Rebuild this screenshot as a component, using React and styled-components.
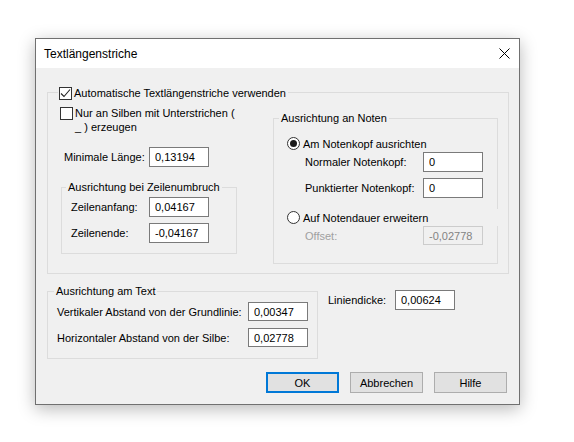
import styled, { createGlobalStyle } from "styled-components";

const GlobalStyle = createGlobalStyle`
  html, body {
    margin: 0;
    padding: 0;
    background: #fff;
  }
  body {
    font-family: "Liberation Sans", Arial, sans-serif;
    font-size: 11px;
    color: #000;
  }
`;

const App = () => {
  return (
    <Page>
      <GlobalStyle />
      <Dialog>
        <TitleBar>
          <Title>Textlängenstriche</Title>
          <CloseIcon width="11" height="11" viewBox="0 0 11 11">
            <path d="M0.5 0.5 L10.5 10.5 M10.5 0.5 L0.5 10.5" stroke="#000" strokeWidth="1" fill="none" />
          </CloseIcon>
        </TitleBar>
        <Body>
          <OuterGroup>
            <CheckLegend>
              <CheckBox checked />
              <span>Automatische Textlängenstriche verwenden</span>
            </CheckLegend>
            <OuterContent>
              <LeftCol>
                <CheckRow>
                  <CheckBox />
                  <CheckText>
                    Nur an Silben mit Unterstrichen (
                    <br />_ ) erzeugen
                  </CheckText>
                </CheckRow>
                <FieldRow $top={13} $indent={4}>
                  <Label $w={85}>Minimale Länge:</Label>
                  <Input defaultValue="0,13194" />
                </FieldRow>
                <WrapGroup>
                  <Legend $left={4}>Ausrichtung bei Zeilenumbruch</Legend>
                  <FieldRow $top={2} $indent={9}>
                    <Label $w={78}>Zeilenanfang:</Label>
                    <Input defaultValue="0,04167" />
                  </FieldRow>
                  <FieldRow $top={6} $indent={9}>
                    <Label $w={78}>Zeilenende:</Label>
                    <Input defaultValue="-0,04167" />
                  </FieldRow>
                </WrapGroup>
              </LeftCol>
              <NotesGroup>
                <Legend $left={-8}>Ausrichtung an Noten</Legend>
                <RadioRow $top={10}>
                  <Radio checked />
                  <span>Am Notenkopf ausrichten</span>
                </RadioRow>
                <FieldRow $top={1} $indent={18}>
                  <Label $w={118}>Normaler Notenkopf:</Label>
                  <Input defaultValue="0" />
                </FieldRow>
                <FieldRow $top={6} $indent={18}>
                  <Label $w={118}>Punktierter Notenkopf:</Label>
                  <Input defaultValue="0" />
                </FieldRow>
                <RadioRow $top={11} $cover>
                  <Radio />
                  <span>Auf Notendauer erweitern</span>
                </RadioRow>
                <FieldRow $top={0} $indent={18}>
                  <Label $w={118} $disabled>Offset:</Label>
                  <Input defaultValue="-0,02778" disabled $h={19} />
                </FieldRow>
              </NotesGroup>
            </OuterContent>
          </OuterGroup>

          <TextSection>
            <TextGroup>
              <Legend $left={6}>Ausrichtung am Text</Legend>
              <FieldRow $top={3} $indent={9}>
                <Label $w={191}>Vertikaler Abstand von der Grundlinie:</Label>
                <Input defaultValue="0,00347" $h={19} />
              </FieldRow>
              <FieldRow $top={7} $indent={9}>
                <Label $w={191}>Horizontaler Abstand von der Silbe:</Label>
                <Input defaultValue="0,02778" $h={19} />
              </FieldRow>
            </TextGroup>
            <LineWidth>
              <Label $w={67}>Liniendicke:</Label>
              <Input defaultValue="0,00624" />
            </LineWidth>
          </TextSection>

          <ButtonRow>
            <Button $default>OK</Button>
            <Button>Abbrechen</Button>
            <Button>Hilfe</Button>
          </ButtonRow>
        </Body>
      </Dialog>
    </Page>
  );
};

const CheckBox = ({ checked }) => (
  <Box>
    {checked && (
      <svg width="11" height="11" viewBox="0 0 11 11">
        <path d="M1 5.5 L4 8.5 L10 1.5" stroke="#222" strokeWidth="1.1" fill="none" />
      </svg>
    )}
  </Box>
);

const Radio = ({ checked }) => <Circle>{checked && <Dot />}</Circle>;

const Page = styled.div`
  padding: 38px 0 0 35px;
  min-height: 442px;
  box-sizing: border-box;
`;

const Dialog = styled.div`
  width: 485px;
  height: 367px;
  box-sizing: border-box;
  border: 1px solid #707070;
  background: #f0f0f0;
  box-shadow: 0 4px 16px rgba(0, 0, 0, 0.28);
  display: flex;
  flex-direction: column;
`;

const TitleBar = styled.div`
  height: 29px;
  background: #fff;
  display: flex;
  align-items: center;
  justify-content: space-between;
  padding: 0 8px;
`;

const Title = styled.span`
  font-size: 12px;
`;

const CloseIcon = styled.svg`
  display: block;
  margin-right: 1px;
`;

const Body = styled.div`
  flex: 1;
  padding: 17px 9px 0 11px;
  display: flex;
  flex-direction: column;
`;

const Group = styled.fieldset`
  margin: 0;
  padding: 0;
  border: 1px solid #dcdcdc;
  min-width: 0;
  box-sizing: border-box;
`;

const OuterGroup = styled(Group)`
  width: 462px;
  padding-bottom: 9px;
`;

const Legend = styled.legend`
  margin-left: ${(p) => p.$left}px;
  padding: 0 2px;
  line-height: 15px;
  height: 15px;
`;

const CheckLegend = styled.legend`
  margin-left: 10px;
  padding: 0 2px 0 1px;
  height: 15px;
  display: flex;
  align-items: center;
  gap: 2px;
`;

const OuterContent = styled.div`
  display: flex;
  align-items: flex-start;
`;

const LeftCol = styled.div`
  width: 225px;
  box-sizing: border-box;
  padding-left: 12px;
  margin-top: 6px;
`;

const CheckRow = styled.div`
  display: flex;
  align-items: flex-start;
  gap: 2px;
`;

const CheckText = styled.span`
  line-height: 14px;
`;

const Box = styled.span`
  flex: none;
  width: 13px;
  height: 13px;
  margin-top: 1px;
  box-sizing: border-box;
  border: 1px solid #333;
  background: #fff;
  display: flex;
  align-items: center;
  justify-content: center;
`;

const Circle = styled.span`
  flex: none;
  width: 13px;
  height: 13px;
  box-sizing: border-box;
  border: 1px solid #333;
  border-radius: 50%;
  background: #fff;
  display: flex;
  align-items: center;
  justify-content: center;
`;

const Dot = styled.span`
  width: 7px;
  height: 7px;
  border-radius: 50%;
  background: #1a1a1a;
`;

const FieldRow = styled.div`
  display: flex;
  align-items: center;
  margin-top: ${(p) => p.$top}px;
  padding-left: ${(p) => p.$indent}px;
`;

const Label = styled.span`
  width: ${(p) => p.$w}px;
  flex: none;
  white-space: nowrap;
  color: ${(p) => (p.$disabled ? "#a0a0a0" : "#000")};
`;

const Input = styled.input`
  width: 60px;
  height: ${(p) => p.$h || 20}px;
  box-sizing: border-box;
  border: 1px solid ${(p) => (p.disabled ? "#cccccc" : "#7a7a7a")};
  background: ${(p) => (p.disabled ? "#f0f0f0" : "#fff")};
  color: ${(p) => (p.disabled ? "#838383" : "#000")};
  font-family: "Liberation Sans", Arial, sans-serif;
  font-size: 11px;
  padding: 0 5px;
  margin: 0;
  outline: none;
`;

const WrapGroup = styled(Group)`
  margin: 13px 0 0 1px;
  width: 176px;
  padding-bottom: 10px;
`;

const NotesGroup = styled(Group)`
  width: 225px;
  margin-top: 11px;
  padding: 0 0 18px 13px;
`;

const RadioRow = styled.div`
  display: flex;
  align-items: center;
  gap: 3px;
  height: ${(p) => (p.$cover ? 17 : 15)}px;
  margin-top: ${(p) => p.$top}px;
  margin-right: ${(p) => (p.$cover ? -2 : 0)}px;
  background: ${(p) => (p.$cover ? "#f0f0f0" : "transparent")};
`;

const TextSection = styled.div`
  display: flex;
  align-items: flex-start;
  margin-top: 10px;
`;

const TextGroup = styled(Group)`
  width: 271px;
  padding-bottom: 11px;
`;

const LineWidth = styled.div`
  display: flex;
  align-items: center;
  margin: 6px 0 0 10px;
`;

const ButtonRow = styled.div`
  display: flex;
  justify-content: flex-end;
  gap: 11px;
  margin-top: 13px;
  padding-right: 3px;
`;

const Button = styled.button`
  width: 73px;
  height: 21px;
  box-sizing: border-box;
  margin: 0;
  padding: 0;
  font-family: "Liberation Sans", Arial, sans-serif;
  font-size: 11px;
  color: #000;
  background: #e1e1e1;
  border: ${(p) => (p.$default ? "2px solid #0078d7" : "1px solid #adadad")};
`;

export default App;
